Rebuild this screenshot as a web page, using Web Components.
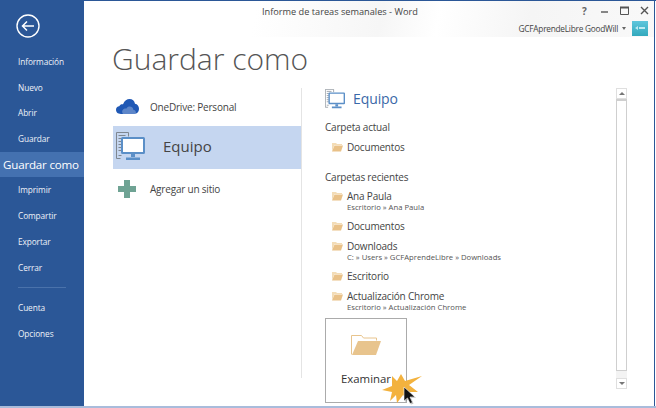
<!DOCTYPE html>
<html lang="es">
<head>
<meta charset="utf-8">
<title>Guardar como</title>
<style>
  html, body { margin: 0; padding: 0; width: 656px; height: 408px; overflow: hidden; background: #fff; }
</style>
</head>
<body>
<word-backstage></word-backstage>

<template id="pc-icon">
  <svg viewBox="0 0 29 29" width="100%" height="100%" fill="none">
    <path d="M.5.5h12v4M.5.500v26h4" stroke="#7f8790" stroke-width="1"/>
    <path d="M2.500 3.500h7M2.500 6.500h3M2.500 9.500h3M2.500 12.500h3M2.500 15.500h3M2.500 18.500h3M2.500 23.500h3" stroke="#7f8790" stroke-width="1"/>
    <rect x="6" y="6" width="22" height="15" rx=".5" fill="#fff" stroke="#5b8fc7" stroke-width="2"/>
    <path d="M15 22h4v3h-4zM10 25.500h14V28H10z" fill="#5b8fc7"/>
  </svg>
</template>

<script>
class SideNav extends HTMLElement {
  connectedCallback() {
    const items = ['Información', 'Nuevo', 'Abrir', 'Guardar', 'Guardar como', 'Imprimir', 'Compartir', 'Exportar', 'Cerrar'];
    this.attachShadow({ mode: 'open' });
    this.shadowRoot.innerHTML = `
      <style>
        :host {
          display: block;
          width: 84px;
          flex: none;
          height: 405px;
          background: #2b5797;
          color: #fff;
          font: 8.300px 'Open Sans', sans-serif;
          letter-spacing: -0.1px;
        }
        .back { display: block; margin: 13px 0 0 16px; width: 24px; height: 24px; }
        ul { list-style: none; margin: 11px 0 0; padding: 0; }
        li { height: 25.7px; line-height: 25.7px; padding-left: 18px; white-space: nowrap; color: #eef2f8; }
        li.on { background: #4471b0; padding-left: 3px; font-size: 11.600px; letter-spacing: -0.2px; color: #fff; }
        hr { border: 0; height: 1px; background: #4a72ab; margin: 7px 18px 7px; }
      </style>
      <svg class="back" viewBox="0 0 24 24" fill="none" stroke="#fff">
        <circle cx="12" cy="12" r="11" stroke-width="1.400"/>
        <path d="M18 12H6.500M11 7.500 6.500 12l4.500 4.500" stroke-width="1.500"/>
      </svg>
      <ul>
        ${items.map(t => `<li class="${t === 'Guardar como' ? 'on' : ''}">${t}</li>`).join('')}
      </ul>
      <hr>
      <ul style="margin-top:0">
        <li>Cuenta</li>
        <li>Opciones</li>
      </ul>`;
  }
}

class TitleBar extends HTMLElement {
  connectedCallback() {
    this.attachShadow({ mode: 'open' });
    this.shadowRoot.innerHTML = `
      <style>
        :host {
          display: grid;
          grid-template-columns: 1fr auto;
          height: 36px;
          font: 9.200px 'Open Sans', sans-serif;
          color: #444;
          background: linear-gradient(100deg, #fff 30%, #f6f6f6 52%, #fff 62%, #f5f5f5 78%, #f9f9f9 100%);
        }
        .name { padding: 4px 0 0 178px; line-height: 14px; white-space: nowrap; }
        .ctl { display: flex; align-items: center; justify-content: flex-end; gap: 11px; height: 19px; padding-right: 5px; }
        .ctl svg { display: block; width: 9px; height: 9px; }
        .q { font-weight: 700; font-size: 10px; color: #666; width: 9px; text-align: center; }
        .user { grid-column: 2; display: flex; align-items: center; height: 16px; padding-right: 6px; white-space: nowrap; font-size: 8.300px; letter-spacing: -0.25px; margin-top: -1px; }
        .caret { width: 0; height: 0; border: 2px solid transparent; border-top: 3px solid #666; margin: 2px 6px 0 4px; }
        .face { width: 16px; height: 15px; background: linear-gradient(#5fc6dc, #33a9bd); display: flex; align-items: center; justify-content: center; }
      </style>
      <div class="name">Informe de tareas semanales - Word</div>
      <div class="ctl">
        <span class="q">?</span>
        <svg viewBox="0 0 9 9"><path d="M1 6h7" stroke="#555" stroke-width="1.400"/></svg>
        <svg viewBox="0 0 9 9" fill="none"><path d="M.500 1.500h8v7h-8z" stroke="#555"/><path d="M0 1.500h9" stroke="#555" stroke-width="2"/></svg>
        <svg viewBox="0 0 9 9"><path d="M1 1l7 7M8 1 1 8" stroke="#555" stroke-width="1.400"/></svg>
      </div>
      <div style="grid-column:1"></div>
      <div class="user">GCFAprendeLibre GoodWill<span class="caret"></span>
        <span class="face"><svg width="10" height="6" viewBox="0 0 10 6"><path d="M0 3l3-2v4zM4 2h6v2H4z" fill="#bfeaf2"/></svg></span>
      </div>`;
  }
}

class PlaceRow extends HTMLElement {
  connectedCallback() {
    const on = this.hasAttribute('selected');
    this.attachShadow({ mode: 'open' });
    this.shadowRoot.innerHTML = `
      <style>
        :host {
          display: flex;
          align-items: center;
          box-sizing: border-box;
          height: ${on ? 43 : 39}px;
          background: ${on ? '#c5d6f0' : 'transparent'};
          color: #444;
          font: ${on ? '15px' : '10px'} 'Open Sans', sans-serif;
          letter-spacing: ${on ? 0 : '-0.2px'};
          white-space: nowrap;
        }
        .ic { width: 28px; margin-right: 9px; flex: none; display: flex; justify-content: center; }
        :host([selected]) { padding-bottom: 4px; }
        :host([selected]) .ic { justify-content: flex-start; padding-left: 3px; width: 47px; margin: 2px 0 0; }
      </style>
      <span class="ic"><slot name="icon"></slot></span>
      <slot></slot>`;
  }
}

class FolderLine extends HTMLElement {
  connectedCallback() {
    const sub = this.getAttribute('sub');
    this.attachShadow({ mode: 'open' });
    this.shadowRoot.innerHTML = `
      <style>
        :host {
          display: grid;
          grid-template-columns: 22px 1fr;
          font: 10px/13px 'Open Sans', sans-serif;
          letter-spacing: -0.2px;
          color: #444;
          white-space: nowrap;
        }
        svg { display: block; margin: 1px 0 0 6px; }
        small { grid-column: 2; font-size: 7.700px; letter-spacing: 0; line-height: 10px; color: #555; display: block; margin-top: -1px; }
      </style>
      <svg width="12" height="10" viewBox="0 0 12 10">
        <path d="M1 9V1h4l1 1h5v1H3.500L1 9z" fill="#f3dcb6"/>
        <path d="M3.500 3.500H12L10 9.500H1z" fill="#e9c188"/>
      </svg>
      <span><slot></slot></span>
      ${sub ? `<small>${sub}</small>` : ''}`;
  }
}

class BrowseTile extends HTMLElement {
  connectedCallback() {
    this.attachShadow({ mode: 'open' });
    this.shadowRoot.innerHTML = `
      <style>
        :host {
          display: flex;
          flex-direction: column;
          align-items: center;
          box-sizing: border-box;
          width: 82px;
          height: 85px;
          border: 1px solid #ababab;
          background: #fff;
          font: 11.400px 'Open Sans', sans-serif;
          color: #333;
        }
        svg { display: block; margin: 15px 0 16px 0; }
        span { line-height: 16px; }
      </style>
      <svg width="30" height="21" viewBox="0 0 30 21">
        <path d="M.5 20.500V1.500h10l2 2.500h13v2.500" fill="none" stroke="#e8c48d"/>
        <path d="M7 7h23l-5 14H1z" fill="#e8c48d"/>
      </svg>
      <span><slot></slot></span>`;
  }
}

class ScrollTrack extends HTMLElement {
  connectedCallback() {
    this.attachShadow({ mode: 'open' });
    this.shadowRoot.innerHTML = `
      <style>
        :host { display: flex; flex-direction: column; width: 11px; height: 301px; flex: none; }
        .btn { height: 11px; box-sizing: border-box; border: 1px solid #dfdfdf; display: flex; align-items: center; justify-content: center; flex: none; }
        .thumb { height: 272px; box-sizing: border-box; border: 1px solid #cfcfcf; border-top-width: 2px; background: #fff; flex: none; }
        .rail { flex: 1; background: #f3f3f3; }
        i { width: 0; height: 0; border: 3px solid transparent; }
        .up { border-bottom: 3px solid #777; border-top: 0; }
        .dn { border-top: 3px solid #777; border-bottom: 0; }
      </style>
      <div class="btn"><i class="up"></i></div>
      <div class="thumb"></div>
      <div class="rail"></div>
      <div class="btn"><i class="dn"></i></div>`;
  }
}

class WordBackstage extends HTMLElement {
  connectedCallback() {
    const pc = () => document.getElementById('pc-icon').innerHTML;
    this.attachShadow({ mode: 'open' });
    this.shadowRoot.innerHTML = `
      <style>
        :host {
          display: block;
          position: relative;
          width: 656px;
          height: 408px;
          box-sizing: border-box;
          border-top: 1px solid #2b5797;
          background: #fff;
          overflow: hidden;
          font-family: 'Open Sans', sans-serif;
        }
        .win { display: flex; box-sizing: border-box; width: 655px; height: 405px; border-right: 1px solid #2b5797; }
        .main { flex: 1; min-width: 0; }
        .foot { height: 2px; background: #a9bcdb; }
        h1 {
          margin: 4px 0 0 28px;
          font: 300 30px/35px 'Open Sans', sans-serif;
          color: #555;
          white-space: nowrap;
        }
        .cols { display: flex; margin: 11px 0 0 29px; }
        .left { width: 188px; flex: none; }
        .rule { width: 1px; height: 290px; margin-top: 1px; background: #e4e4e4; flex: none; }
        .right { width: 314px; flex: none; padding-left: 23px; box-sizing: border-box; }
        h2 { display: flex; align-items: center; gap: 8px; margin: 0; font: 400 14px/22px 'Open Sans', sans-serif; letter-spacing: -0.1px; color: #3a68a8; }
        h2 span.i { width: 20px; height: 20px; display: block; }
        h3 { margin: 0; font: 400 10px/14px 'Open Sans', sans-serif; letter-spacing: -0.2px; color: #444; }
        .burst { position: absolute; left: 381px; top: 366px; }
      </style>
      <div class="win">
        <side-nav></side-nav>
        <div class="main">
          <title-bar></title-bar>
          <h1>Guardar como</h1>
          <div class="cols">
            <div class="left">
              <place-row>
                <svg slot="icon" width="23" height="15" viewBox="0 0 23 15"><path d="M5 15C1.500 15 0 13 0 10.800 0 8.500 1.500 7.500 3.200 7.300 4 5.500 5.500 5 7 5.300 8.500 1.500 11 0 13.500 0c3 0 5 2 5.500 4.800 2.500.4 4 2.300 4 5 0 3-2 5.200-4.500 5.200z" fill="#1f58b5"/><path d="M7 15c-2-3 0-6 3.500-5.500C12 6.500 17 7 17.500 11c2 0 3 2 2 4z" fill="#fff" opacity=".28"/></svg>
                OneDrive: Personal
              </place-row>
              <place-row selected>
                <span slot="icon" style="display:block;width:29px;height:29px">${pc()}</span>
                Equipo
              </place-row>
              <place-row>
                <svg slot="icon" width="18" height="18" viewBox="0 0 18 18"><path d="M6 0h6v6h6v6h-6v6H6v-6H0V6h6z" fill="#6fa394"/></svg>
                Agregar un sitio
              </place-row>
            </div>
            <div class="rule"></div>
            <div class="right">
              <h2 style="margin-top:1px"><span class="i">${pc()}</span>Equipo</h2>
              <h3 style="margin-top:10px">Carpeta actual</h3>
              <folder-line style="margin-top:7px">Documentos</folder-line>
              <h3 style="margin-top:16px">Carpetas recientes</h3>
              <folder-line style="margin-top:6px" sub="Escritorio » Ana Paula">Ana Paula</folder-line>
              <folder-line style="margin-top:8px">Documentos</folder-line>
              <folder-line style="margin-top:7px" sub="C: » Users » GCFAprendeLibre » Downloads">Downloads</folder-line>
              <folder-line style="margin-top:8px">Escritorio</folder-line>
              <folder-line style="margin-top:7px" sub="Escritorio » Actualización Chrome">Actualización Chrome</folder-line>
              <browse-tile style="margin-top:6px">Examinar</browse-tile>
            </div>
            <scroll-track style="margin-top:1px"></scroll-track>
          </div>
        </div>
      </div>
      <div class="foot"></div>
      <svg class="burst" width="44" height="40" viewBox="0 0 44 40">
        <path d="M20 7 24 14 41 9 28 18 37 25 27 25 29 34 22 28 16 36 15 28 9 34 11 25 1 23 11 19 11 9 16 14z" fill="#f3b23e"/>
        <path d="M24 21v14l3.500-3 2.500 5.500 2.500-1-2.500-5.500h5z" fill="#777" opacity=".5"/>
        <path d="M23 20v14l3.500-3 2.500 5.500 2.500-1-2.500-5.500h5z" fill="#111" stroke="#fff" stroke-width=".6"/>
      </svg>`;
  }
}

customElements.define('side-nav', SideNav);
customElements.define('title-bar', TitleBar);
customElements.define('place-row', PlaceRow);
customElements.define('folder-line', FolderLine);
customElements.define('browse-tile', BrowseTile);
customElements.define('scroll-track', ScrollTrack);
customElements.define('word-backstage', WordBackstage);
</script>
</body>
</html>
